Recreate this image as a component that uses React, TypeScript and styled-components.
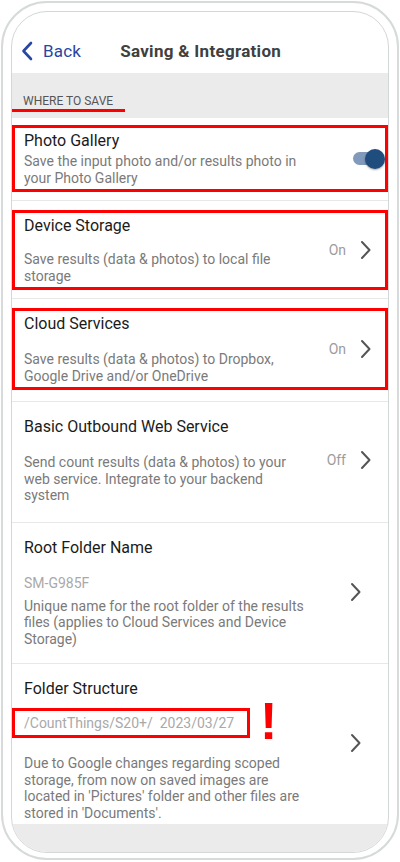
import styled, { createGlobalStyle } from "styled-components";

const GlobalStyle = createGlobalStyle`
  html, body {
    margin: 0;
    padding: 0;
    background: #fff;
  }
  body {
    font-family: Roboto, "Noto Sans", "Liberation Sans", sans-serif;
  }
  * {
    box-sizing: border-box;
  }
`;

const Frame = styled.div`
  margin: 1px;
  height: 859px;
  border: 2px solid #d6dada;
  border-radius: 46px;
  padding: 8px 8px 5px;
  background: #fff;
  display: flex;
`;

const Screen = styled.div`
  flex: 1;
  border: 1.5px solid #d3d7d7;
  border-radius: 36px;
  overflow: hidden;
  display: flex;
  flex-direction: column;
  background: #fff;
`;

const Header = styled.header`
  height: 61px;
  flex-shrink: 0;
  display: flex;
  align-items: flex-end;
  padding: 0 0 12px 9px;
`;

const BackButton = styled.button`
  display: flex;
  align-items: center;
  gap: 10px;
  border: 0;
  background: none;
  padding: 0;
  font: 400 17px/20px Roboto, sans-serif;
  color: #2847a3;
  letter-spacing: 0.2px;
`;

const Title = styled.h1`
  margin: 0 0 0 39px;
  font: 700 17px/20px Roboto, sans-serif;
  color: #404040;
  letter-spacing: 0.3px;
`;

const SectionBand = styled.div`
  background: #ebebeb;
  height: 45px;
  flex-shrink: 0;
  display: flex;
  align-items: flex-end;
  padding-bottom: 6px;
`;

const SectionLabel = styled.div`
  padding: 0 12px 0 11px;
  font: 400 12px/16px Roboto, sans-serif;
  color: #555;
  text-transform: uppercase;
  border-bottom: 3px solid #f00;
`;

const List = styled.div`
  display: flex;
  flex-direction: column;
`;

const Row = styled.div<{ $last?: boolean; $pb?: number }>`
  padding: 9px 0 ${(p) => (p.$last ? 0 : p.$pb ?? 10)}px;
  border-bottom: ${(p) => (p.$last ? "none" : "1px solid #e8e8e8")};
  &:first-child {
    padding-top: 7px;
  }
`;

const Box = styled.div<{ $marked?: boolean; $last?: boolean }>`
  border: 3px solid ${(p) => (p.$marked ? "#f00" : "transparent")};
  padding: 3px 14px ${(p) => (p.$last ? 0 : 3)}px 9px;
  display: flex;
  align-items: center;
`;

const TextCol = styled.div`
  width: 284px;
  display: flex;
  flex-direction: column;
`;

const ItemTitle = styled.div`
  font: 400 16px/20px Roboto, sans-serif;
  color: #1b1b1b;
`;

const Desc = styled.div<{ $gap?: number }>`
  margin-top: ${(p) => p.$gap ?? 15}px;
  font: 400 14px/16.5px Roboto, sans-serif;
  color: #7a7a7a;
`;

const Value = styled.div<{ $gap?: number }>`
  margin-top: ${(p) => p.$gap ?? 17}px;
  font: 400 14px/16px Roboto, sans-serif;
  color: #a9a9a9;
  white-space: pre;
`;

const PathLine = styled.div`
  margin-top: 9px;
  display: flex;
  align-items: center;
`;

const PathBox = styled.div`
  margin-left: -12px;
  width: 238px;
  border: 3px solid #f00;
  padding: 4px 9px 3px;
  font: 400 14px/17px Roboto, sans-serif;
  color: #a9a9a9;
  white-space: pre;
`;

const Bang = styled.span`
  margin-left: 10px;
  height: 30px;
  font: 700 52px/30px "Liberation Sans", Arial, sans-serif;
  color: #f00;
  transform: translateY(-2px);
`;

const Side = styled.div<{ $inset?: boolean; $lift?: number }>`
  margin-left: auto;
  margin-right: ${(p) => (p.$inset ? 10 : 0)}px;
  margin-bottom: ${(p) => p.$lift ?? 0}px;
  display: flex;
  align-items: center;
  gap: 14px;
`;

const State = styled.span`
  font: 400 14px/16px Roboto, sans-serif;
  color: #9c9c9c;
`;

const Toggle = styled.div`
  position: relative;
  width: 32px;
  height: 22px;
  margin-right: -14px;
  display: flex;
  align-items: center;
`;

const Track = styled.div`
  width: 28px;
  height: 13px;
  border-radius: 7px;
  background: #8199ba;
`;

const Thumb = styled.div`
  position: absolute;
  right: 0;
  top: 1px;
  width: 20px;
  height: 20px;
  border-radius: 50%;
  background: #1f4d7d;
  box-shadow: 0 1px 2px rgba(0, 0, 0, 0.35);
`;

const Filler = styled.div`
  flex: 1;
  background: #ebebeb;
`;

function Chevron() {
  return (
    <svg width="11" height="20" viewBox="0 0 11 20">
      <path d="M2 2 L9.5 10 L2 18" fill="none" stroke="#555" strokeWidth="2" strokeLinecap="round" strokeLinejoin="round" />
    </svg>
  );
}

function BackChevron() {
  return (
    <svg width="12" height="20" viewBox="0 0 12 20">
      <path d="M10 2 L2.5 10 L10 18" fill="none" stroke="#2847a3" strokeWidth="2.6" strokeLinecap="round" strokeLinejoin="round" />
    </svg>
  );
}

export default function App() {
  return (
    <>
      <GlobalStyle />
      <Frame>
        <Screen>
          <Header>
            <BackButton>
              <BackChevron />
              Back
            </BackButton>
            <Title>Saving &amp; Integration</Title>
          </Header>
          <SectionBand>
            <SectionLabel>Where to save</SectionLabel>
          </SectionBand>
          <List>
            <Row $pb={8}>
              <Box $marked>
                <TextCol>
                  <ItemTitle>Photo Gallery</ItemTitle>
                  <Desc $gap={2}>Save the input photo and/or results photo in your Photo Gallery</Desc>
                </TextCol>
                <Side>
                  <Toggle>
                    <Track />
                    <Thumb />
                  </Toggle>
                </Side>
              </Box>
            </Row>
            <Row $pb={8}>
              <Box $marked>
                <TextCol>
                  <ItemTitle>Device Storage</ItemTitle>
                  <Desc>Save results (data &amp; photos) to local file storage</Desc>
                </TextCol>
                <Side>
                  <State>On</State>
                  <Chevron />
                </Side>
              </Box>
            </Row>
            <Row $pb={11}>
              <Box $marked>
                <TextCol>
                  <ItemTitle>Cloud Services</ItemTitle>
                  <Desc $gap={17}>Save results (data &amp; photos) to Dropbox, Google Drive and/or OneDrive</Desc>
                </TextCol>
                <Side>
                  <State>On</State>
                  <Chevron />
                </Side>
              </Box>
            </Row>
            <Row $pb={12}>
              <Box>
                <TextCol>
                  <ItemTitle>Basic Outbound Web Service</ItemTitle>
                  <Desc $gap={17}>Send count results (data &amp; photos) to your web service. Integrate to your backend system</Desc>
                </TextCol>
                <Side>
                  <State>Off</State>
                  <Chevron />
                </Side>
              </Box>
            </Row>
            <Row>
              <Box>
                <TextCol>
                  <ItemTitle>Root Folder Name</ItemTitle>
                  <Value>SM-G985F</Value>
                  <Desc $gap={7}>Unique name for the root folder of the results files (applies to Cloud Services and Device Storage)</Desc>
                </TextCol>
                <Side $inset>
                  <Chevron />
                </Side>
              </Box>
            </Row>
            <Row $last>
              <Box $last>
                <TextCol>
                  <ItemTitle>Folder Structure</ItemTitle>
                  <PathLine>
                    <PathBox>/CountThings/S20+/  2023/03/27</PathBox>
                    <Bang>!</Bang>
                  </PathLine>
                  <Desc $gap={17}>
                    Due to Google changes regarding scoped storage, from now on saved images are located in 'Pictures' folder and other files are stored in 'Documents'.
                  </Desc>
                </TextCol>
                <Side $inset $lift={14}>
                  <Chevron />
                </Side>
              </Box>
            </Row>
          </List>
          <Filler />
        </Screen>
      </Frame>
    </>
  );
}
